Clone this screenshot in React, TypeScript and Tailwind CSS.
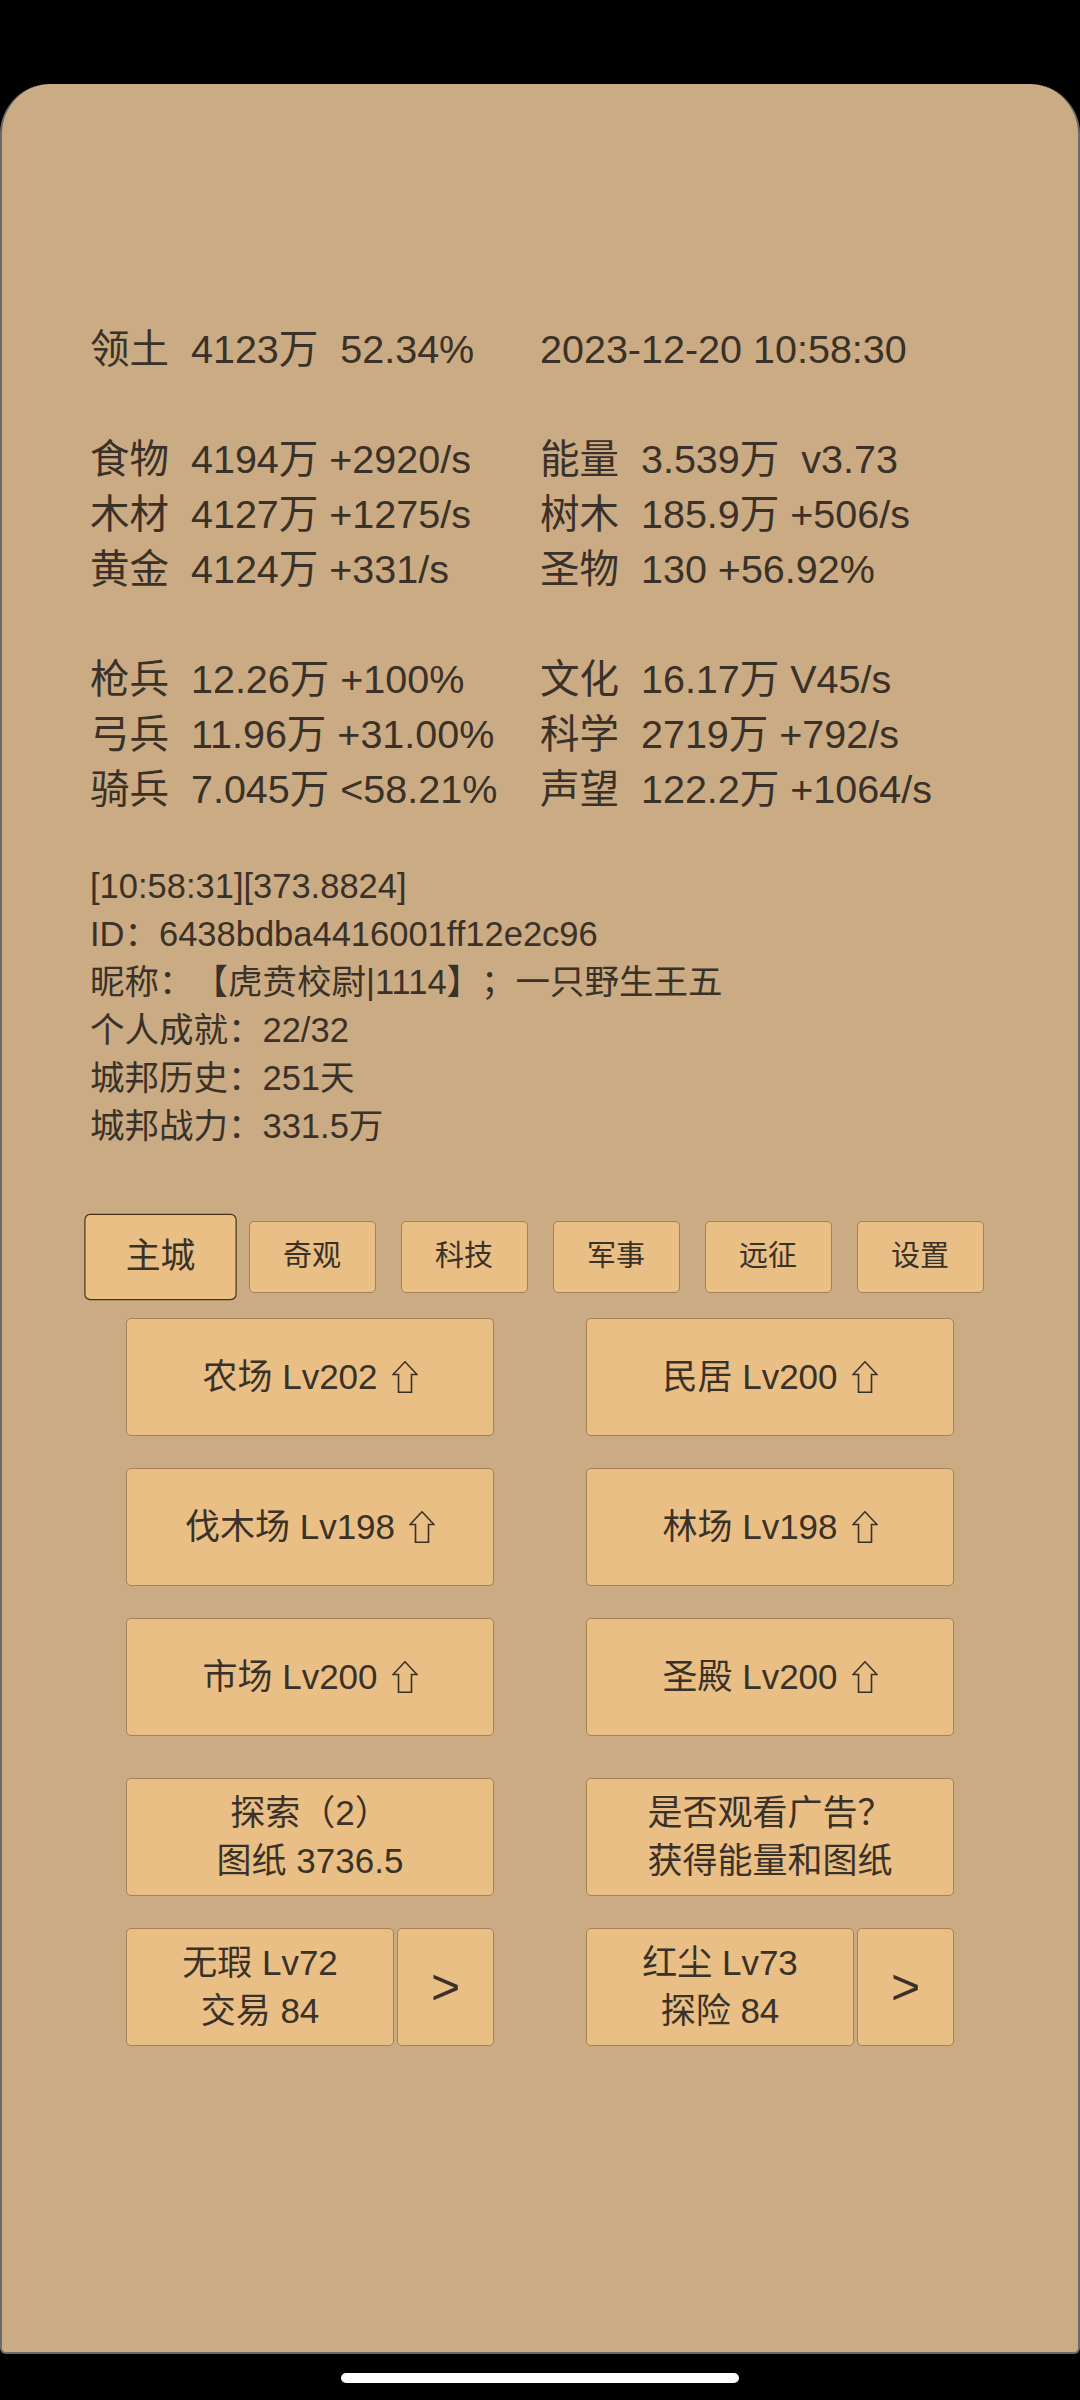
const stats: [string, string][][] = [
  [["领土  4123万  52.34%", "2023-12-20 10:58:30"]],
  [
    ["食物  4194万 +2920/s", "能量  3.539万  v3.73"],
    ["木材  4127万 +1275/s", "树木  185.9万 +506/s"],
    ["黄金  4124万 +331/s", "圣物  130 +56.92%"],
  ],
  [
    ["枪兵  12.26万 +100%", "文化  16.17万 V45/s"],
    ["弓兵  11.96万 +31.00%", "科学  2719万 +792/s"],
    ["骑兵  7.045万 <58.21%", "声望  122.2万 +1064/s"],
  ],
];

const info = [
  "[10:58:31][373.8824]",
  "ID：6438bdba4416001ff12e2c96",
  "昵称：【虎贲校尉|1114】；一只野生王五",
  "个人成就：22/32",
  "城邦历史：251天",
  "城邦战力：331.5万",
];

const tabs = ["主城", "奇观", "科技", "军事", "远征", "设置"];

const buildings: [string, string][] = [
  ["农场 Lv202", "民居 Lv200"],
  ["伐木场 Lv198", "林场 Lv198"],
  ["市场 Lv200", "圣殿 Lv200"],
];

function UpArrow() {
  return (
    <svg width="26" height="32" viewBox="0 0 26 32" className="shrink-0">
      <path
        d="M13 0.8 L25 13.5 L19.5 13.5 L19.5 31.2 L6.5 31.2 L6.5 13.5 L1 13.5 Z"
        fill="none"
        stroke="#3a3128"
        strokeWidth="1.6"
        strokeLinejoin="miter"
      />
    </svg>
  );
}

const btn =
  "bg-[#e9bf86] border border-[#a58155] rounded-[5px] flex items-center justify-center";

function App() {
  return (
    <div
      className="w-[1080px] min-h-[2400px] bg-black flex flex-col text-[#3a3128] [text-spacing-trim:space-all]"
      style={{ fontFamily: '"Liberation Sans", "Noto Sans CJK SC", sans-serif' }}
    >
      <div className="h-[84px] shrink-0" />
      <main className="h-[2270px] shrink-0 bg-[#cbab83] rounded-t-[50px] rounded-b-[6px] border-x-2 border-b-2 border-[#6c6a6a] pt-[238px]">
        {/* stats */}
        <div className="px-[88px] text-[39.5px] leading-[55px] flex flex-col gap-[55px]">
          {stats.map((group, gi) => (
            <div key={gi}>
              {group.map((row, ri) => (
                <div key={ri} className="grid grid-cols-2">
                  <span className="whitespace-pre">{row[0]}</span>
                  <span className="whitespace-pre">{row[1]}</span>
                </div>
              ))}
            </div>
          ))}
        </div>

        {/* info */}
        <div className="px-[88px] mt-[45px] text-[34.5px] leading-[48px]">
          {info.map((line) => (
            <div key={line} className="whitespace-pre">
              {line}
            </div>
          ))}
        </div>

        {/* tabs */}
        <div className="mt-[71px] flex justify-center gap-[25px]">
          {tabs.map((t, i) => (
            <button
              key={t}
              className={
                i === 0
                  ? "w-[127px] h-[72px] bg-[#e9bf86] rounded-[5px] border-[1.5px] border-[#47321a] scale-[1.2] text-[29px] flex items-center justify-center"
                  : "w-[127px] h-[72px] bg-[#e9bf86] rounded-[5px] border border-[#a58155] text-[29px] flex items-center justify-center"
              }
            >
              {t}
            </button>
          ))}
        </div>

        {/* buildings */}
        <div className="mt-[25px] flex flex-col gap-[32px] text-[35px] leading-[48px]">
          {buildings.map((row, ri) => (
            <div key={ri} className="flex justify-center gap-[92px]">
              {row.map((b) => (
                <button key={b} className={`${btn} w-[368px] h-[118px] gap-[14px]`}>
                  <span>{b}</span>
                  <UpArrow />
                </button>
              ))}
            </div>
          ))}

          <div className="mt-[10px] flex justify-center gap-[92px]">
            <button className={`${btn} w-[368px] h-[118px] flex-col`}>
              <span>探索（2）</span>
              <span>图纸 3736.5</span>
            </button>
            <button className={`${btn} w-[368px] h-[118px] flex-col`}>
              <span>是否观看广告？</span>
              <span>获得能量和图纸</span>
            </button>
          </div>

          <div className="flex justify-center gap-[92px]">
            {[
              ["无瑕 Lv72", "交易 84"],
              ["红尘 Lv73", "探险 84"],
            ].map(([a, b]) => (
              <div key={a} className="w-[368px] h-[118px] flex gap-[3px]">
                <button className={`${btn} w-[268px] h-full flex-col`}>
                  <span>{a}</span>
                  <span>{b}</span>
                </button>
                <button className={`${btn} flex-1 h-full text-[50px]`}>&gt;</button>
              </div>
            ))}
          </div>
        </div>
      </main>
      <div className="flex justify-center pt-[19px]">
        <div className="w-[398px] h-[10px] rounded-full bg-white" />
      </div>
    </div>
  );
}

export default App;
